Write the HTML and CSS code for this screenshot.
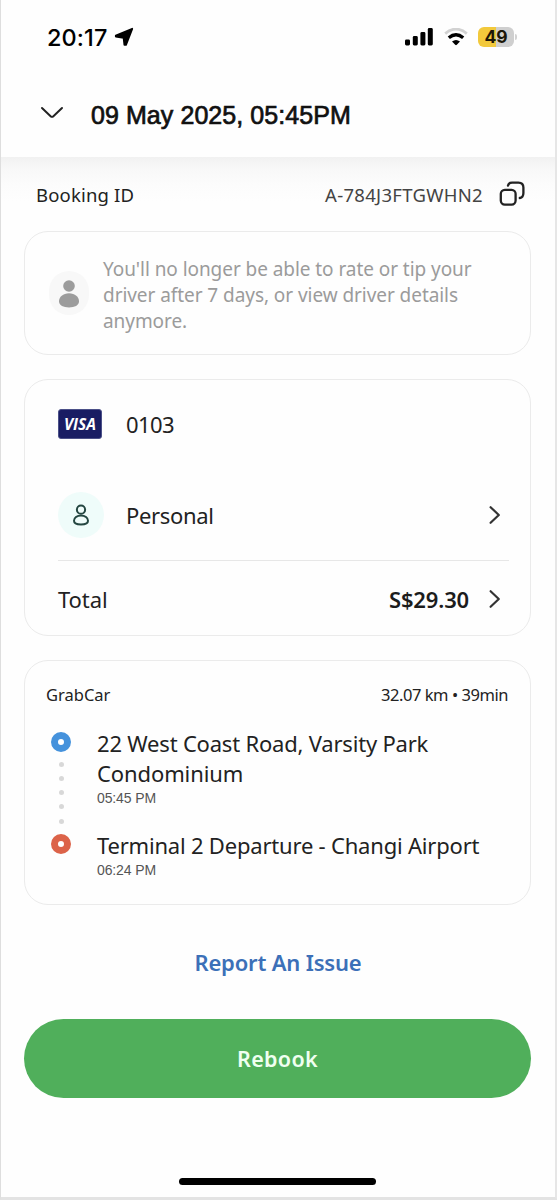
FILE: index.html
```html
<!DOCTYPE html>
<html lang="en">
<head>
<meta charset="utf-8">
<meta name="viewport" content="width=device-width, initial-scale=1">
<title>Booking details</title>
<link rel="stylesheet" href="styles.css">
</head>
<body>
<div class="screen">
  <div class="status">
    <span class="clock">20:17</span>
    <svg class="location" width="20" height="20" viewBox="0 0 20 20"><path d="M18.2 1.8 12 17.8 10.4 17.8 9.6 10.8 1.8 9.6 1.8 8.6Z" stroke="#000" stroke-width="1.8" stroke-linejoin="round"/></svg>
    <svg class="signal" width="28" height="18" viewBox="0 0 28 18"><rect x="0" y="11.4" width="5" height="6" rx="1.4"/><rect x="7.8" y="8" width="5" height="9.4" rx="1.4"/><rect x="15.4" y="4" width="5" height="13.4" rx="1.4"/><rect x="22.8" y="0" width="5" height="17.4" rx="1.4"/></svg>
    <svg class="wifi" width="24" height="18" viewBox="0 0 24 18"><path d="M1.2 5.6Q12-3.4 22.8 5.6" fill="none" stroke="#d2d2d2" stroke-width="2.8"/><path d="M4.8 9.8Q12 3.8 19.2 9.8" fill="none" stroke="#000" stroke-width="3.4"/><path d="M8 13.4Q12 10.4 16 13.4L12.8 16.8Q12 17.6 11.2 16.8Z"/></svg>
    <div class="battery"><span>49</span></div>
    <i class="battery-tip"></i>
  </div>
  <header class="header">
    <svg width="24" height="14" viewBox="0 0 24 14"><path d="M2 2 10.6 10.2Q12 11.4 13.4 10.2L22 2" fill="none" stroke="#222" stroke-width="2" stroke-linecap="round"/></svg>
    <h1>09 May 2025, 05:45PM</h1>
  </header>
  <div class="booking">
    <span class="booking-label">Booking ID</span>
    <span class="booking-id">A-784J3FTGWHN2</span>
    <svg width="26" height="26" viewBox="0 0 26 26" fill="none" stroke="#222" stroke-width="2.3" stroke-linecap="round"><rect x="1.8" y="8.8" width="14.8" height="14.8" rx="4"/><path d="M9 4.5Q9.6 1.6 13 1.6H19.4Q24.4 1.6 24.4 6.6V12Q24.4 16.4 20.8 17"/></svg>
  </div>
  <section class="card notice">
    <div class="avatar"><svg width="22" height="28" viewBox="0 0 22 28" fill="#9c9c9c"><circle cx="11" cy="6" r="5.8"/><path d="M11 13.2C17 13.2 21 17 21 21.2S16.5 27.4 11 27.4 1 25.4 1 21.2 5 13.2 11 13.2Z"/></svg></div>
    <p><span class="n1">You'll no longer be able to rate or tip your</span><br><span class="n2">driver after 7 days, or view driver details</span><br><span class="n3">anymore.</span></p>
  </section>
  <section class="card payment">
    <div class="row method"><div class="visa"><span>VISA</span></div><span class="digits">0103</span></div>
    <div class="row profile">
      <div class="profile-icon"><svg width="18" height="22" viewBox="0 0 18 22" fill="none" stroke="#244641" stroke-width="2"><circle cx="9" cy="5.7" r="4.1"/><path d="M9 11.4C13 11.4 16 14 16 16.7S13 20.4 9 20.4 2 19.4 2 16.7 5 11.4 9 11.4Z"/></svg></div>
      <span class="personal">Personal</span>
      <svg class="chevron" width="12" height="20" viewBox="0 0 12 20"><path d="M1.6 2.2 9.8 10 1.6 17.8"/></svg>
    </div>
    <div class="row total">
      <span class="total-label">Total</span><b>S$29.30</b>
      <svg class="chevron" width="12" height="20" viewBox="0 0 12 20"><path d="M1.6 2.2 9.8 10 1.6 17.8"/></svg>
    </div>
  </section>
  <section class="card trip">
    <div class="trip-head"><span class="service">GrabCar</span><span class="distance">32.07 km • 39min</span></div>
    <div class="route">
      <div class="track"><i class="stop start"></i><div class="dots"><i></i><i></i><i></i><i></i><i></i></div><i class="stop end"></i></div>
      <div class="places">
        <div class="place"><span class="p1">22 West Coast Road, Varsity Park</span><span class="p2">Condominium</span></div>
        <time>05:45 PM</time>
        <div class="place second"><span class="p3">Terminal 2 Departure - Changi Airport</span></div>
        <time>06:24 PM</time>
      </div>
    </div>
  </section>
  <a class="report"><span>Report An Issue</span></a>
  <button class="rebook"><span>Rebook</span></button>
  <div class="home"></div>
</div>
</body>
</html>
```
FILE: styles.css
```css
* { box-sizing: border-box; }
body { margin: 0; background: #fefefe; color: #222; font-family: "Noto Sans", sans-serif; }
.screen { width: 557px; height: 1200px; overflow: hidden; display: flex; flex-direction: column; border-left: 1px solid #dedede; border-right: 2px solid #e6e6e6; border-bottom: 3px solid #e3e3e3; padding: 0 23px; white-space: nowrap; }
.screen svg { flex: none; display: block; }
.status { height: 74px; flex: none; display: flex; align-items: center; padding-left: 23px; color: #000; }
.clock { width: 67px; font: 550 23.5px Inter, sans-serif; letter-spacing: .1px; }
.signal { margin-left: 271px; }
.wifi { margin-left: 11px; }
.battery { margin-left: 10px; width: 36px; height: 20px; border-radius: 6px; background: linear-gradient(90deg, #f2c93c 50%, #cfcfcf 50%); font: 650 17.5px/20px Inter, sans-serif; text-align: center; color: #1c1708; }
.battery-tip { width: 2px; height: 6px; margin-left: 1px; border-radius: 0 3px 3px 0; background: #d2d2d2; }
.header { height: 83px; flex: none; margin: 0 -23px; padding: 0 0 1px 39px; display: flex; align-items: center; gap: 27px; }
.header svg { margin-top: -4px; }
.header h1 { margin: 0; font: 400 25px "Liberation Sans", Arial, sans-serif; letter-spacing: .07px; color: #111; -webkit-text-stroke: .7px #111; }
.booking { height: 74px; flex: none; margin: 0 -23px; padding: 0 30px 0 35px; display: flex; align-items: center; font-size: 18.5px; background: linear-gradient(#f1f1f1, #f8f8f8 12px, #fcfcfc 28px, #fefefe 45px); }
.booking-label { letter-spacing: .18px; }
.booking-id { margin-left: auto; margin-right: 16px; color: #444; letter-spacing: .3px; }
.card { flex: none; width: 507px; border: 1.5px solid #ebebeb; border-radius: 24px; margin-bottom: 24px; }
.notice { height: 124px; display: flex; align-items: center; gap: 14px; padding-left: 24px; }
.avatar { width: 40px; height: 44px; border-radius: 20px; background: #f8f8f8; display: flex; align-items: center; justify-content: center; }
.avatar svg { margin-top: 2px; }
.notice p { margin: 4px 0 0; font-size: 19px; line-height: 26px; letter-spacing: -.06px; color: #9b9b9b; }
.payment { height: 257px; padding: 0 21px 0 33px; font-size: 22px; }
.row { display: flex; align-items: center; }
.method { height: 88px; gap: 24px; }
.digits { letter-spacing: -.6px; }
.visa { width: 44px; height: 30px; border-radius: 3px; background: #191d63; border: 1px solid #4b5088; color: #fff; font: italic 700 15.5px/29px "Open Sans", sans-serif; text-align: center; }
.profile { height: 93px; padding-top: 2px; border-bottom: 1.5px solid #e7e7e7; gap: 22px; }
.personal { letter-spacing: -.35px; }
.profile-icon { width: 46px; height: 46px; border-radius: 50%; background: #effcfa; display: flex; align-items: center; justify-content: center; }
.chevron { margin-left: auto; margin-right: 8px; fill: none; stroke: #333; stroke-width: 2.2; stroke-linecap: round; stroke-linejoin: round; }
.total { height: 76px; }
.total-label { letter-spacing: -.1px; }
.total b { margin-left: auto; font-weight: 600; font-size: 22px; letter-spacing: -.15px; color: #1c1c1c; }
.total .chevron { margin-left: 20px; }
.trip { height: 245px; padding: 17px 21px 0; }
.trip-head { height: 32px; display: flex; justify-content: space-between; align-items: center; font-size: 16.5px; }
.distance { font-size: 16.5px; letter-spacing: -.45px; margin-right: 1px; }
.route { display: flex; padding-left: 5px; gap: 26px; margin-top: 21.5px; }
.track { display: flex; flex-direction: column; align-items: center; }
.stop { width: 20px; height: 20px; border-radius: 50%; border: 7px solid #4592dc; background: #fff; }
.end { border-color: #dc6349; }
.dots { height: 82px; padding: 10px 0 10px; display: flex; flex-direction: column; justify-content: space-between; }
.dots i { width: 5px; height: 5px; border-radius: 50%; background: #d8d8d8; }
.places { margin-top: -4px; }
.place { font-size: 22px; line-height: 30px; letter-spacing: -.2px; display: flex; flex-direction: column; align-items: flex-start; }
.p2 { letter-spacing: -.1px; }
.places time { display: block; font: 14px/20px "Liberation Sans", Arial, sans-serif; letter-spacing: -.12px; color: #555; }
.second { margin-top: 22px; }
.report { flex: none; height: 66px; display: flex; justify-content: center; align-items: center; font-weight: 600; font-size: 22px; letter-spacing: -.18px; color: #3c70b8; }
.rebook { flex: none; margin: 24px 0 0; width: 507px; height: 79px; border: 0; border-radius: 40px; background: #50af5b; color: #effff0; font: 600 21.5px "Noto Sans", sans-serif; letter-spacing: .3px; }
.home { flex: none; width: 197px; height: 7px; border-radius: 4px; background: #000; margin: 80px 0 0 155px; }
```
